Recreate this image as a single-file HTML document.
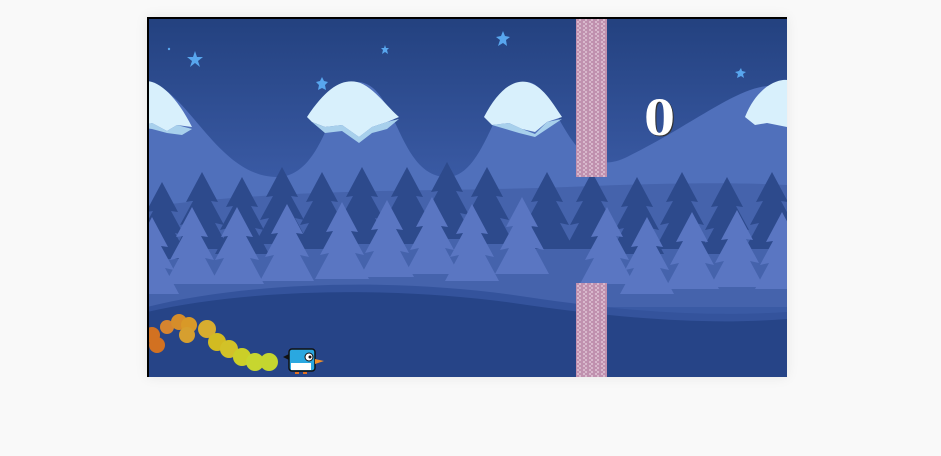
<!DOCTYPE html><html><head><style>body{margin:0;background:#f9f9f9;width:941px;height:456px;overflow:hidden;position:relative}
#g{position:absolute;left:147px;top:17px;width:640px;height:360px;box-shadow:0 0 12px rgba(0,0,0,.08)}
.sc{position:absolute;left:644px;top:86px;font:bold 54px "Liberation Serif",serif;color:#fff;text-shadow:1px 1px 0 #333;transform:scaleX(1.15);transform-origin:left}</style></head><body>
<svg id="g" width="640" height="360" viewBox="0 0 640 360">
<defs><linearGradient id="sky" x1="0" y1="0" x2="0" y2="1"><stop offset="0" stop-color="#23417f"/><stop offset=".45" stop-color="#3a5aa4"/></linearGradient>
<pattern id="pp" width="6" height="4" patternUnits="userSpaceOnUse"><rect width="6" height="4" fill="#d8b8cc"/><path d="M0 1h4M2 3h4" stroke="#a86a92" stroke-width="1"/></pattern>
<g id="tr"><path d="M0 -45 L-16 -15 L-9 -16 L-22 8 L-13 6 L-27 32 L27 32 L13 6 L22 8 L9 -16 L16 -15Z"/></g></defs>
<rect width="640" height="360" fill="url(#sky)"/>
<path d="M-60 200 C-20 120 -10 60 0 65 C40 70 70 160 130 160 C180 160 185 65 210 65 C250 65 250 160 300 160 C340 160 350 65 380 65 C410 65 420 170 480 140 C560 100 600 60 640 70 L640 200Z" fill="#5070bb"/>
<path d="M-10 70 C0 55 25 70 45 110 L30 108 L20 114 L5 106 L-10 110Z M160 100 C180 70 195 62 210 65 C225 68 240 90 252 100 L240 105 L225 110 L212 120 L195 108 L178 110 L165 105Z M337 100 C350 75 365 62 380 65 C395 68 405 85 415 100 L400 105 L388 115 L375 112 L362 106 L345 108Z M598 100 C610 70 630 62 640 63 L640 110 L620 106 L608 108Z" fill="#d8f0fc"/>
<path d="M-10 110 L5 106 L20 114 L30 108 L45 112 L35 118 L20 116 L5 112Z M165 105 L178 110 L195 108 L212 120 L225 110 L240 105 L252 102 L240 112 L225 116 L212 126 L195 114 L178 116Z M345 108 L362 106 L375 112 L388 117 L400 105 L415 102 L400 112 L388 120 L372 116Z" fill="#a8d0ec"/>
<path d="M0 190 C150 170 300 175 420 170 C520 166 580 165 640 168 L640 290 L0 290Z" fill="#4563ac"/>
<g fill="#2d4a8c"><use href="#tr" x="15" y="210"/><use href="#tr" x="55" y="200"/><use href="#tr" x="95" y="205"/><use href="#tr" x="135" y="195"/><use href="#tr" x="175" y="200"/><use href="#tr" x="215" y="195"/><use href="#tr" x="260" y="195"/><use href="#tr" x="300" y="190"/><use href="#tr" x="340" y="195"/><use href="#tr" x="400" y="200"/><use href="#tr" x="445" y="200"/><use href="#tr" x="490" y="205"/><use href="#tr" x="535" y="200"/><use href="#tr" x="580" y="205"/><use href="#tr" x="625" y="200"/></g>
<g fill="#5a76c2"><use href="#tr" x="5" y="245"/><use href="#tr" x="45" y="235"/><use href="#tr" x="90" y="235"/><use href="#tr" x="140" y="232"/><use href="#tr" x="195" y="230"/><use href="#tr" x="240" y="228"/><use href="#tr" x="285" y="225"/><use href="#tr" x="325" y="232"/><use href="#tr" x="375" y="225"/><use href="#tr" x="460" y="235"/><use href="#tr" x="500" y="245"/><use href="#tr" x="545" y="240"/><use href="#tr" x="590" y="238"/><use href="#tr" x="635" y="240"/></g>
<path d="M0 290 C100 265 250 260 380 280 C480 295 560 300 640 295 L640 360 L0 360Z" fill="#34539c"/>
<path d="M0 295 C100 272 250 268 380 288 C480 302 560 308 640 302 L640 360 L0 360Z" fill="#264487"/>
<g fill="#58a6ee"><path d="M48 34l2 6 6 0-5 4 2 6-5-4-5 4 2-6-5-4 6 0z"/><path d="M175 60l2 4 4 1-3 3 1 5-4-2-4 2 1-5-3-3 4-1z"/><path d="M238 28l1 3 3 0-2 2 1 4-3-2-3 2 1-4-2-2 3 0z"/><path d="M356 14l2 5 5 1-4 3 1 6-4-3-5 3 2-6-4-3 5-1z"/><path d="M594 51l1 3 4 1-3 2 1 4-3-2-4 2 1-4-3-2 4-1z"/><circle cx="22" cy="32" r="1.2"/></g>
<rect x="429" y="0" width="31" height="160" fill="url(#pp)"/>
<rect x="429" y="266" width="31" height="94" fill="url(#pp)"/>
<g opacity=".85"><circle cx="5" cy="318" r="8" fill="#f07a10"/><circle cx="10" cy="328" r="8" fill="#f07a10"/><circle cx="20" cy="310" r="7" fill="#f59020"/><circle cx="32" cy="305" r="8" fill="#f59a1a"/><circle cx="42" cy="308" r="8" fill="#f8a818"/><circle cx="40" cy="318" r="8" fill="#f5b020"/><circle cx="60" cy="312" r="9" fill="#f8c020"/><circle cx="70" cy="325" r="9" fill="#f0d010"/><circle cx="82" cy="332" r="9" fill="#f0d818"/><circle cx="95" cy="340" r="9" fill="#e8e818"/><circle cx="108" cy="345" r="9" fill="#e4f020"/><circle cx="122" cy="345" r="9" fill="#e0f020"/></g>
<g transform="translate(140,330)"><path d="M-4 10 l6 -3 0 6z" fill="#111"/><rect x="2" y="2" width="26" height="22" rx="3" fill="#2aa8e0" stroke="#111" stroke-width="1.5"/><rect x="4" y="16" width="20" height="7" fill="#fff"/><circle cx="22" cy="10" r="4" fill="#fff" stroke="#111"/><circle cx="23" cy="10" r="1.5" fill="#111"/><path d="M28 12l9 2-9 3z" fill="#f0902a"/><path d="M8 26h4M16 26h4" stroke="#e07020" stroke-width="2"/></g>
<path d="M0 0H640M0 0V360" stroke="#000" stroke-width="4"/>
</svg>
<div class="sc">0</div>
</body></html>
